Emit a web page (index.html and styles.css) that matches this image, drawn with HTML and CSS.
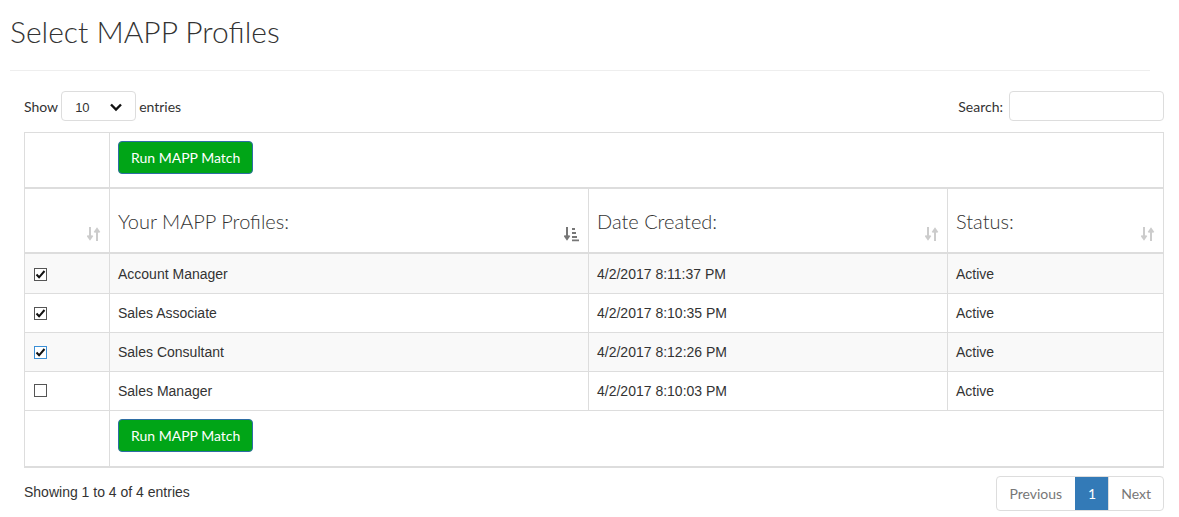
FILE: index.html
```html
<!DOCTYPE html>
<html lang="en">
<head>
    <meta charset="UTF-8">
    <meta name="viewport" content="width=device-width, initial-scale=1.0">
    <title>Select MAPP Profiles</title>
    <link rel="stylesheet" href="styles.css">
</head>
<body>
    <div class="page">
        <h1 class="title">Select MAPP Profiles</h1>
        <hr class="rule">

        <div class="wrapper">
            <div class="toolbar">
                <label class="length">Show
                    <span class="select">10
                        <svg width="14" height="10" viewBox="0 0 14 10"><path d="M2 2.5 L7 7.5 L12 2.5" fill="none" stroke="#111" stroke-width="2.4"/></svg>
                    </span>
                    entries</label>
                <label class="search">Search: <input type="text"></label>
            </div>

            <table class="profiles">
                <colgroup>
                    <col style="width:85px">
                    <col style="width:479px">
                    <col style="width:359px">
                    <col>
                </colgroup>
                <thead>
                    <tr class="action-row">
                        <th></th>
                        <th colspan="3"><button class="run">Run MAPP Match</button></th>
                    </tr>
                    <tr class="head-row">
                        <th><span class="sort"><svg width="14" height="16" viewBox="0 0 14 16"><path d="M3 1v11.5M0.5 9.5l2.5 3.5 2.5-3.5M10 15V3.5M7.5 6.5L10 3l2.5 3.5" fill="none" stroke="#ccc" stroke-width="2"/></svg></span></th>
                        <th>Your MAPP Profiles:<span class="sort"><svg width="16" height="16" viewBox="0 0 16 16"><path d="M3 1v11.5M0.5 9.5l2.5 3.5 2.5-3.5" fill="none" stroke="#777" stroke-width="2"/><path d="M8 2h3v2H8zM8 6h4v2H8zM8 10h5v2H8zM8 13.5h7v1.8H8z" fill="#777"/></svg></span></th>
                        <th>Date Created:<span class="sort"><svg width="14" height="16" viewBox="0 0 14 16"><path d="M3 1v11.5M0.5 9.5l2.5 3.5 2.5-3.5M10 15V3.5M7.5 6.5L10 3l2.5 3.5" fill="none" stroke="#ccc" stroke-width="2"/></svg></span></th>
                        <th>Status:<span class="sort"><svg width="14" height="16" viewBox="0 0 14 16"><path d="M3 1v11.5M0.5 9.5l2.5 3.5 2.5-3.5M10 15V3.5M7.5 6.5L10 3l2.5 3.5" fill="none" stroke="#ccc" stroke-width="2"/></svg></span></th>
                    </tr>
                </thead>
                <tbody>
                    <tr>
                        <td><span class="check on"><svg width="11" height="11" viewBox="0 0 11 11"><path d="M1.5 5.5l2.6 2.8L9.5 2" fill="none" stroke="#111" stroke-width="2"/></svg></span></td>
                        <td>Account Manager</td>
                        <td>4/2/2017 8:11:37 PM</td>
                        <td>Active</td>
                    </tr>
                    <tr>
                        <td><span class="check on"><svg width="11" height="11" viewBox="0 0 11 11"><path d="M1.5 5.5l2.6 2.8L9.5 2" fill="none" stroke="#111" stroke-width="2"/></svg></span></td>
                        <td>Sales Associate</td>
                        <td>4/2/2017 8:10:35 PM</td>
                        <td>Active</td>
                    </tr>
                    <tr>
                        <td><span class="check on focus"><svg width="11" height="11" viewBox="0 0 11 11"><path d="M1.5 5.5l2.6 2.8L9.5 2" fill="none" stroke="#111" stroke-width="2"/></svg></span></td>
                        <td>Sales Consultant</td>
                        <td>4/2/2017 8:12:26 PM</td>
                        <td>Active</td>
                    </tr>
                    <tr>
                        <td><span class="check"></span></td>
                        <td>Sales Manager</td>
                        <td>4/2/2017 8:10:03 PM</td>
                        <td>Active</td>
                    </tr>
                </tbody>
                <tfoot>
                    <tr class="action-row">
                        <td></td>
                        <td colspan="3"><button class="run">Run MAPP Match</button></td>
                    </tr>
                </tfoot>
            </table>

            <div class="footer">
                <div class="info">Showing 1 to 4 of 4 entries</div>
                <ul class="pager">
                    <li class="prev">Previous</li>
                    <li class="active">1</li>
                    <li>Next</li>
                </ul>
            </div>
        </div>
    </div>
</body>
</html>
```

FILE: styles.css
```css
body{
    margin: 0;
    font-family: Lato, 'Liberation Sans', sans-serif;
    font-size: 14px;
    color: #333;
    background: #fff;
}
.page{
    width: 1140px;
    padding: 0 10px;
}
.title{
    font-size: 30px;
    font-weight: 300;
    margin: 0;
    padding-top: 13px;
    line-height: 36px;
}
.rule{
    border: none;
    border-top: 1px solid #eee;
    margin: 21px 0 0;
}
.wrapper{
    width: 1140px;
    margin-left: 14px;
}
.toolbar{
    display: flex;
    justify-content: space-between;
    align-items: center;
    margin-top: 20px;
    height: 30px;
}
.length{
    display: flex;
    align-items: center;
    gap: 3px;
}
.select{
    display: inline-flex;
    align-items: center;
    justify-content: space-between;
    box-sizing: border-box;
    width: 75px;
    height: 30px;
    padding: 2px 12px 0 13px;
    border: 1px solid #ddd;
    border-radius: 4px;
    font-family: 'Liberation Sans', Arial, sans-serif;
    font-size: 13px;
}
.search{
    display: flex;
    align-items: center;
    gap: 6px;
}
.search input{
    box-sizing: border-box;
    width: 155px;
    height: 30px;
    border: 1px solid #ddd;
    border-radius: 4px;
}
.profiles{
    width: 1140px;
    table-layout: fixed;
    border-collapse: collapse;
    margin-top: 11px;
    border: 1px solid #ddd;
}
.profiles th,
.profiles td{
    border: 1px solid #ddd;
    text-align: left;
}
.action-row th,
.action-row td{
    padding: 8px 8px 13px;
    vertical-align: top;
}
thead .action-row th{
    border-bottom: 2px solid #ddd;
}
tfoot .action-row td{
    padding-bottom: 14px;
    border-bottom: 2px solid #ddd;
}
.run{
    font-family: Lato, sans-serif;
    font-size: 14px;
    color: #fff;
    background: #00a517;
    border: 1px solid #2e6da4;
    border-radius: 4px;
    padding: 6px 12px;
    line-height: 19px;
    cursor: pointer;
}
.head-row th{
    position: relative;
    font-size: 20px;
    font-weight: 300;
    line-height: 28px;
    padding: 18px 30px 17px 8px;
    border-bottom: 2px solid #ddd;
}
.sort{
    position: absolute;
    right: 8px;
    bottom: 10px;
    line-height: 0;
}
.profiles tbody td{
    font-family: 'Liberation Sans', Arial, sans-serif;
    font-size: 14px;
    line-height: 20px;
    padding: 9px 8px 9px;
}
.profiles tbody tr:first-child td{
    padding-top: 10px;
}
.profiles tbody tr:nth-child(odd){
    background: #f9f9f9;
}
.check{
    display: inline-block;
    box-sizing: border-box;
    width: 13px;
    height: 13px;
    border: 1px solid #555;
    background: #fff;
    vertical-align: -1px;
    margin-left: 1px;
    line-height: 0;
}
.check.focus{
    border-color: #3b8fd6;
}
.footer{
    display: flex;
    justify-content: space-between;
    align-items: flex-start;
    margin-top: 8px;
}
.info{
    font-family: 'Liberation Sans', Arial, sans-serif;
    line-height: 20px;
    padding-top: 6px;
}
.pager{
    display: flex;
    list-style: none;
    margin: 0;
    padding: 0;
    border: 1px solid #ddd;
    border-radius: 4px;
    overflow: hidden;
}
.pager li{
    padding: 7px 12px 6px;
    line-height: 20px;
    color: #777;
    border-left: 1px solid #ddd;
}
.pager li.prev{
    padding: 7px 13px 6px 12px;
}
.pager li:first-child{
    border-left: none;
}
.pager li.active{
    background: #337ab7;
    color: #fff;
    border-left-color: #337ab7;
}
```
